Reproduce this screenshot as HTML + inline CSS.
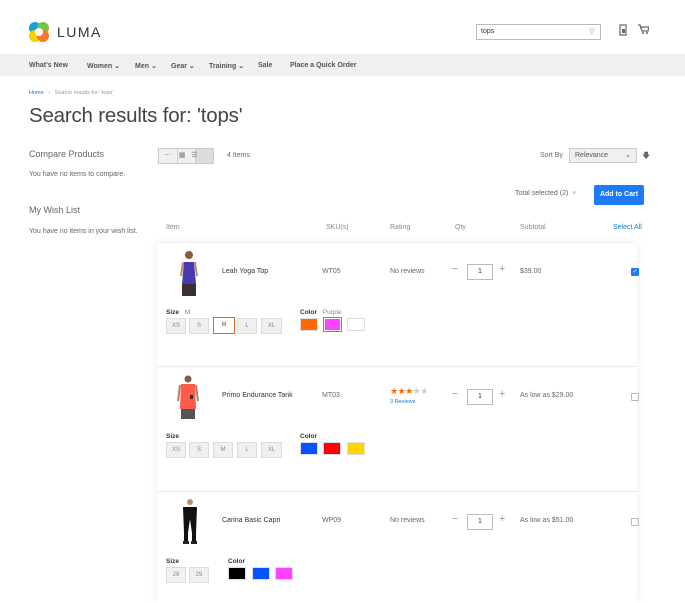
<!DOCTYPE html>
<html><head><meta charset="utf-8"><style>
*{margin:0;padding:0;box-sizing:border-box}
body{width:685px;height:600px;overflow:hidden;background:#fff;font-family:"Liberation Sans",sans-serif;color:#333;position:relative}
.a{position:absolute;white-space:nowrap}
.s7{font-size:7px}
.nav{position:absolute;left:0;top:54px;width:685px;height:22px;background:#f0f0f0}
.nav span{position:absolute;top:8px;font-size:7px;font-weight:bold;color:#555}
.btn{position:absolute;height:16px;border:1px solid #ddd;background:#f0f0f0;color:#888;font-size:6px;text-align:center;line-height:14px}
.sw{position:absolute;height:13px;border:1px solid #ddd}
.lbl{position:absolute;font-size:6.5px;font-weight:bold;color:#333}
.g{color:#666}
.qty{position:absolute;width:26px;height:16px;border:1px solid #bbb;font-size:7px;text-align:center;line-height:14px}
.cb{position:absolute;width:8px;height:8px;border:1px solid #bbb;border-radius:1px}
.line{position:absolute;left:157px;width:480px;height:1px;background:#e6eef5}
</style></head><body>
<svg class="a" style="left:28px;top:21px" width="22" height="22" viewBox="0 0 22 22">
<circle cx="7" cy="7" r="6" fill="#1aa0d8"/><circle cx="15" cy="7" r="6" fill="#7cc242"/><circle cx="7" cy="15" r="6" fill="#f6d100"/><circle cx="15" cy="15" r="6" fill="#f37b29"/><circle cx="11" cy="11" r="4" fill="#fff"/></svg>
<div class="a" style="left:57px;top:24px;font-size:14px;letter-spacing:1.5px;color:#333">LUMA</div>
<div class="a" style="left:476px;top:24px;width:125px;height:16px;border:1px solid #bbb;font-size:7px;padding:3px 4px">tops</div>
<div class="a" style="left:589px;top:27px;font-size:8px;color:#bbb">&#9906;</div>
<svg class="a" style="left:618px;top:24px" width="10" height="12"><rect x="2" y="1" width="6" height="10" fill="none" stroke="#666" stroke-width="1.2"/><rect x="4" y="5" width="3" height="4" fill="#666"/></svg>
<svg class="a" style="left:638px;top:24px" width="11" height="10"><path d="M0 1h2l2 6h6l1-4H3" fill="none" stroke="#666" stroke-width="1.3"/><circle cx="5" cy="9" r="1" fill="#666"/><circle cx="9" cy="9" r="1" fill="#666"/></svg>
<div class="nav"><span style="left:29px">What's New</span><span style="left:87px">Women &#8964;</span><span style="left:135px">Men &#8964;</span><span style="left:171px">Gear &#8964;</span><span style="left:209px">Training &#8964;</span><span style="left:258px">Sale</span><span style="left:290px">Place a Quick Order</span></div>
<div class="a" style="left:29px;top:90px;font-size:5.5px;color:#1979c3">Home <span style="color:#999">&nbsp;&nbsp;›&nbsp;&nbsp; Search results for: 'tops'</span></div>
<div class="a" style="left:29px;top:104px;font-size:20.5px;font-weight:normal;color:#444;letter-spacing:-0.2px">Search results for: 'tops'</div>
<div class="a" style="left:29px;top:149px;font-size:9px;color:#666">Compare Products</div>
<div class="a s7 g" style="left:29px;top:171px">You have no items to compare.</div>
<div class="a" style="left:29px;top:205px;font-size:9px;color:#666">My Wish List</div>
<div class="a s7 g" style="left:29px;top:228px">You have no items in your wish list.</div>
<div class="a" style="left:158px;top:148px;width:56px;height:16px;border:1px solid #ccc;background:#f0f0f0"></div>
<div class="a" style="left:177px;top:148px;width:19px;height:16px;border-left:1px solid #ccc;border-right:1px solid #ccc"></div>
<div class="a" style="left:196px;top:149px;width:17px;height:14px;background:#ddd"></div>
<div class="a" style="left:164px;top:151px;font-size:7px;color:#777">&#8943;&nbsp;&nbsp;&nbsp;&nbsp;&#9638;&nbsp;&nbsp;&nbsp;&#9776;</div>
<div class="a s7 g" style="left:227px;top:152px">4 Items</div>
<div class="a s7 g" style="left:540px;top:152px">Sort By</div>
<div class="a" style="left:569px;top:148px;width:68px;height:15px;border:1px solid #ccc;background:#f0f0f0;font-size:7px;padding:3px 5px;color:#555">Relevance<span style="position:absolute;right:5px;top:2px">&#8964;</span></div>
<div class="a" style="left:642px;top:150px;font-size:8px;color:#666">&#129095;</div>
<div class="a s7 g" style="left:515px;top:190px">Total selected (2) <span style="color:#aaa">&nbsp;×</span></div>
<div class="a" style="left:594px;top:185px;width:50px;height:20px;background:#1f7bf5;border-radius:2px;color:#fff;font-size:7px;font-weight:bold;text-align:center;line-height:20px">Add to Cart</div>
<div class="a s7" style="left:166px;top:224px;color:#888">Item</div>
<div class="a s7" style="left:326px;top:224px;color:#888">SKU(s)</div>
<div class="a s7" style="left:390px;top:224px;color:#888">Rating</div>
<div class="a s7" style="left:455px;top:224px;color:#888">Qty</div>
<div class="a s7" style="left:520px;top:224px;color:#888">Subtotal</div>
<div class="a s7" style="left:613px;top:224px;color:#1979c3">Select All</div>
<div class="a" style="left:157px;top:243px;width:480px;height:360px;background:#fff;box-shadow:0 0 8px rgba(180,200,220,.35)"></div>
<div class="line" style="top:366px"></div><div class="line" style="top:491px"></div>

<svg class="a" style="left:177px;top:250px" width="24" height="47"><circle cx="12" cy="5" r="4" fill="#8a5a40"/><path d="M7 12h10l2 22H5z" fill="#4a3ab0"/><path d="M5 34h14v12H5z" fill="#3a3034"/><path d="M6 12l-2 14M18 12l2 14" stroke="#c08a6a" stroke-width="2"/></svg>
<div class="a s7" style="left:222px;top:268px">Leah Yoga Top</div>
<div class="a s7 g" style="left:322px;top:268px">WT05</div>
<div class="a s7 g" style="left:390px;top:268px">No reviews</div>
<div class="a" style="left:452px;top:264px;font-size:10px;color:#888">−</div>
<div class="qty" style="left:467px;top:264px">1</div>
<div class="a" style="left:499px;top:263px;font-size:11px;color:#999">+</div>
<div class="a s7 g" style="left:520px;top:268px">$39.00</div>
<div class="cb" style="left:631px;top:268px;background:#1f7bf5;border-color:#1f7bf5;color:#fff;font-size:6px;line-height:6px;text-align:center">✓</div>
<div class="lbl" style="left:166px;top:309px">Size <span style="font-weight:normal;color:#888;margin-left:4px">M</span></div>
<div class="btn" style="left:166px;top:318px;width:20px">XS</div><div class="btn" style="left:189px;top:318px;width:20px">S</div>
<div class="btn" style="left:213px;top:317px;width:22px;height:17px;border-color:#e8641b;background:#fff;color:#555;line-height:15px">M</div>
<div class="btn" style="left:237px;top:318px;width:20px">L</div><div class="btn" style="left:261px;top:318px;width:21px">XL</div>
<div class="lbl" style="left:300px;top:309px">Color <span style="font-weight:normal;color:#888;margin-left:4px">Purple</span></div>
<div class="sw" style="left:300px;top:318px;width:18px;background:#ff6a00"></div>
<div class="sw" style="left:323px;top:317px;width:19px;height:15px;background:#ff42ff;border:1px solid #e8641b;box-shadow:inset 0 0 0 1px #fff"></div>
<div class="sw" style="left:347px;top:318px;width:18px;background:#fff"></div>

<svg class="a" style="left:175px;top:375px" width="26" height="46"><circle cx="13" cy="4" r="3.5" fill="#8a5a40"/><path d="M6 9h14l1 25H5z" fill="#ff5a4a"/><rect x="15" y="20" width="3" height="4" fill="#333"/><path d="M6 34h14v10H6z" fill="#555"/><path d="M5 10l-2 16M21 10l2 16" stroke="#b5806a" stroke-width="2"/></svg>
<div class="a s7" style="left:222px;top:392px">Primo Endurance Tank</div>
<div class="a s7 g" style="left:322px;top:392px">MT03</div>
<div class="a" style="left:390px;top:386px;font-size:9px;letter-spacing:-0.5px"><span style="color:#ff6a00">★★★</span><span style="color:#ccc">★★</span></div>
<div class="a" style="left:390px;top:399px;font-size:5.5px;color:#1979c3">3 Reviews</div>
<div class="a" style="left:452px;top:389px;font-size:10px;color:#888">−</div>
<div class="qty" style="left:467px;top:389px">1</div>
<div class="a" style="left:499px;top:388px;font-size:11px;color:#999">+</div>
<div class="a s7 g" style="left:520px;top:392px">As low as $29.00</div>
<div class="cb" style="left:631px;top:393px"></div>
<div class="lbl" style="left:166px;top:433px">Size</div>
<div class="btn" style="left:166px;top:442px;width:20px">XS</div><div class="btn" style="left:189px;top:442px;width:20px">S</div><div class="btn" style="left:213px;top:442px;width:20px">M</div><div class="btn" style="left:237px;top:442px;width:20px">L</div><div class="btn" style="left:261px;top:442px;width:21px">XL</div>
<div class="lbl" style="left:300px;top:433px">Color</div>
<div class="sw" style="left:300px;top:442px;width:18px;background:#0055ff"></div>
<div class="sw" style="left:323px;top:442px;width:18px;background:#ff0000"></div>
<div class="sw" style="left:347px;top:442px;width:18px;background:#ffd500"></div>

<svg class="a" style="left:178px;top:499px" width="24" height="46"><circle cx="12" cy="3" r="3" fill="#c08a6a"/><path d="M5 8h14l-1 26h-4l-2-14-2 14H6z" fill="#111"/><path d="M6 34h4v8H6zM14 34h4v8h-4z" fill="#111"/><path d="M5 42h6v3H5zM13 42h6v3h-6z" fill="#222"/></svg>
<div class="a s7" style="left:222px;top:517px">Carina Basic Capri</div>
<div class="a s7 g" style="left:322px;top:517px">WP09</div>
<div class="a s7 g" style="left:390px;top:517px">No reviews</div>
<div class="a" style="left:452px;top:514px;font-size:10px;color:#888">−</div>
<div class="qty" style="left:467px;top:514px">1</div>
<div class="a" style="left:499px;top:513px;font-size:11px;color:#999">+</div>
<div class="a s7 g" style="left:520px;top:517px">As low as $51.00</div>
<div class="cb" style="left:631px;top:518px"></div>
<div class="lbl" style="left:166px;top:558px">Size</div>
<div class="btn" style="left:166px;top:567px;width:20px">28</div><div class="btn" style="left:189px;top:567px;width:20px">29</div>
<div class="lbl" style="left:228px;top:558px">Color</div>
<div class="sw" style="left:228px;top:567px;width:18px;background:#000"></div>
<div class="sw" style="left:252px;top:567px;width:18px;background:#0055ff"></div>
<div class="sw" style="left:275px;top:567px;width:18px;background:#ff42ff"></div>
</body></html>
